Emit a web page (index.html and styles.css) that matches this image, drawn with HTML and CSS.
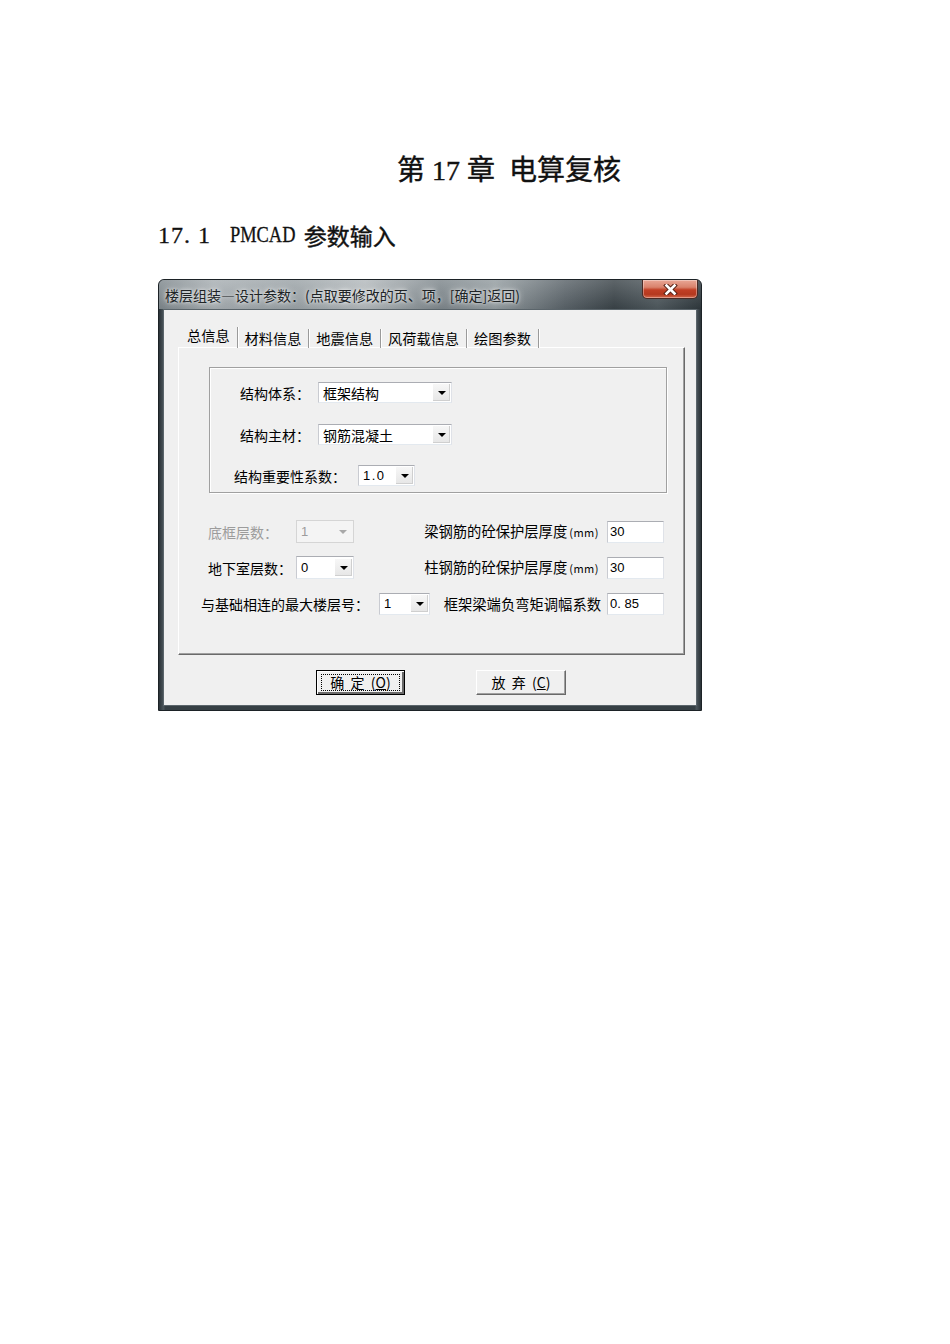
FILE: index.html
```html
<!DOCTYPE html>
<html lang="zh-CN">
<head>
<meta charset="utf-8">
<title>第17章 电算复核</title>
<link rel="stylesheet" href="styles.css">
</head>
<body>
<div class="page">
  <h1 class="chapter">第 17 章&nbsp;&nbsp;电算复核</h1>
  <h2 class="section"><span class="secnum">17. 1</span><span class="pm">PMCAD</span><span class="seccn">参数输入</span></h2>

  <div class="window">
    <div class="titlebar">
      <span class="title">楼层组装—设计参数：(点取要修改的页、项，[确定]返回)</span>
      <div class="close">
        <svg width="15" height="11" viewBox="0 0 15 11">
          <path d="M3.5 1.5 L11.5 9.5 M11.5 1.5 L3.5 9.5" stroke="#5a2418" stroke-width="4.6" stroke-linecap="square" fill="none"/>
          <path d="M3.5 1.5 L11.5 9.5 M11.5 1.5 L3.5 9.5" stroke="#ffffff" stroke-width="2.6" stroke-linecap="square" fill="none"/>
        </svg>
      </div>
    </div>
    <div class="client">
      <div class="tabs">
        <span class="tab active">总信息</span>
        <span class="tab">材料信息</span>
        <span class="tab">地震信息</span>
        <span class="tab">风荷载信息</span>
        <span class="tab">绘图参数</span>
      </div>
      <div class="panel">
        <div class="group">
          <div class="grow g1">
            <span class="lbl lbl-a">结构体系：</span>
            <div class="combo combo-wide"><span class="cval">框架结构</span><span class="arrow"><i class="tri"></i></span></div>
          </div>
          <div class="grow g2">
            <span class="lbl lbl-a">结构主材：</span>
            <div class="combo combo-wide"><span class="cval">钢筋混凝土</span><span class="arrow"><i class="tri"></i></span></div>
          </div>
          <div class="grow g3">
            <span class="lbl lbl-b">结构重要性系数：</span>
            <div class="combo combo-imp"><span class="cval num">1.0</span><span class="arrow"><i class="tri"></i></span></div>
          </div>
        </div>

        <div class="rows">
          <div class="row">
            <div class="left left-ab">
              <span class="lbl lbl-c disabled">底框层数：</span>
              <div class="combo combo-s disabled-box"><span class="cval num">1</span><span class="arrow"><i class="tri grey"></i></span></div>
            </div>
            <div class="right">
              <span class="lbl">梁钢筋的砼保护层厚度<span class="mm">(mm)</span></span>
              <div class="input"><span class="num">30</span></div>
            </div>
          </div>
          <div class="row">
            <div class="left left-ab">
              <span class="lbl lbl-c">地下室层数：</span>
              <div class="combo combo-s"><span class="cval num">0</span><span class="arrow"><i class="tri"></i></span></div>
            </div>
            <div class="right">
              <span class="lbl">柱钢筋的砼保护层厚度<span class="mm">(mm)</span></span>
              <div class="input"><span class="num">30</span></div>
            </div>
          </div>
          <div class="row">
            <div class="left left-c">
              <span class="lbl lbl-d">与基础相连的最大楼层号：</span>
              <div class="combo combo-xs"><span class="cval num">1</span><span class="arrow"><i class="tri"></i></span></div>
            </div>
            <div class="right">
              <span class="lbl">框架梁端负弯矩调幅系数</span>
              <div class="input"><span class="num">0. 85</span></div>
            </div>
          </div>
        </div>
      </div>

      <div class="buttons">
        <div class="btn btn-default"><span class="focus">确&nbsp;&nbsp;定&nbsp;&nbsp;(<u>O</u>)</span></div>
        <div class="btn"><span class="plain">放&nbsp;&nbsp;弃&nbsp;&nbsp;(<u>C</u>)</span></div>
      </div>
    </div>
  </div>
</div>
</body>
</html>
```

FILE: styles.css
```css
* { box-sizing: border-box; margin: 0; padding: 0; }

body {
  background: #ffffff;
  color: #000;
  font-family: "Noto Sans CJK SC", sans-serif;
  width: 950px;
  height: 1344px;
}

.page {
  padding: 151px 0 0 158px;
}

.chapter {
  width: 702px;
  text-align: center;
  font-family: "Liberation Serif", "Noto Sans CJK SC", serif;
  font-size: 28px;
  line-height: 40px;
  font-weight: 400;
  -webkit-text-stroke: 0.4px #111;
  color: #111;
}

.section {
  margin-top: 29px;
  height: 30px;
  display: flex;
  align-items: center;
  font-weight: 400;
  color: #111;
}

.secnum {
  font-family: "Liberation Serif", serif;
  font-size: 24px;
  width: 72px;
  letter-spacing: 1px;
  -webkit-text-stroke: 0.3px #111;
}

.pm {
  display: inline-block;
  font-family: "Liberation Serif", serif;
  font-size: 23px;
  transform: scaleX(0.8);
  transform-origin: left center;
  margin-right: -12px;
  -webkit-text-stroke: 0.3px #111;
}

.seccn {
  font-family: "Noto Sans CJK SC", sans-serif;
  font-size: 23px;
  font-weight: 400;
  -webkit-text-stroke: 0.4px #111;
  margin-left: 4px;
}

/* ---------- window ---------- */
.window {
  margin-top: 29px;
  width: 544px;
  height: 432px;
  border: 1px solid #1c2226;
  border-radius: 6px 6px 0 0;
  background:
    linear-gradient(to right, #2a3237 0%, #4a545a 0.8%, #363f44 1.2%, #363f44 98.8%, #4a545a 99.2%, #2a3237 100%);
  display: flex;
  flex-direction: column;
  overflow: hidden;
}

.titlebar {
  height: 29px;
  display: flex;
  align-items: flex-start;
  background:
    linear-gradient(to bottom, rgba(255,255,255,0.18), rgba(0,0,0,0.05)),
    linear-gradient(to right, #7e878c 0%, #a7aeb2 10%, #9aa2a6 25%, #b3b9bc 38%, #7d868b 52%, #939ca0 62%, #596268 75%, #3a4348 84%, #4f595e 92%, #2f383d 100%);
}

.title {
  margin: 6px 0 0 6px;
  font-size: 14px;
  line-height: 18px;
  color: #202426;
  text-shadow: 0 0 6px rgba(255,255,255,0.9), 0 0 3px rgba(255,255,255,0.7);
  white-space: nowrap;
}

.close {
  margin-left: auto;
  margin-right: 3px;
  width: 56px;
  height: 19px;
  border: 1px solid #4a2a24;
  border-top: none;
  border-radius: 0 0 5px 5px;
  background: linear-gradient(to bottom, #e9a796 0%, #d9826c 40%, #c13f25 55%, #b5391f 80%, #d4694c 100%);
  box-shadow: inset 0 0 0 1px rgba(255,255,255,0.35);
  display: flex;
  align-items: center;
  justify-content: center;
}

.client {
  margin: 0 4px 4px 4px;
  flex: 1;
  background: #f0f0f0;
  border: 1px solid #5b656b;
  padding: 15px 11px 0 14px;
}

/* ---------- tabs ---------- */
.tabs {
  height: 23px;
  display: flex;
  align-items: flex-end;
  padding-left: 3px;
  margin-bottom: -1px;
}

.tab {
  font-size: 14.2px;
  line-height: 19px;
  height: 19px;
  padding: 0 7px 0 6px;
  border-right: 1px solid #9a9a9a;
  box-shadow: 1px 0 0 #ffffff;
  margin-right: 1px;
  color: #000;
  white-space: nowrap;
}

.tab.active {
  line-height: 17px;
  height: 21px;
  padding-right: 7px;
}

.panel {
  width: 507px;
  height: 308px;
  border-top: 1px solid #ffffff;
  border-left: 1px solid #ffffff;
  border-right: 1px solid #6a6a6a;
  border-bottom: 1px solid #6a6a6a;
  box-shadow: inset -1px -1px 0 #a0a0a0;
  padding: 19px 0 0 30px;
}

.group {
  width: 458px;
  height: 126px;
  border: 1px solid #a0a0a0;
  box-shadow: inset 1px 1px 0 #ffffff, 1px 1px 0 #ffffff;
  padding-top: 14px;
  display: flex;
  flex-direction: column;
}

.grow {
  display: flex;
  align-items: center;
  height: 21px;
}

.g1 { padding-left: 30px; }
.g2 { padding-left: 30px; margin-top: 21px; }
.g3 { padding-left: 24px; margin-top: 20px; }

.lbl {
  font-size: 14px;
  line-height: 20px;
  white-space: nowrap;
  color: #000;
}

.lbl-a { width: 78px; }
.lbl-b { width: 124px; }
.lbl-c { width: 88px; }
.lbl-d { width: 178px; }

.disabled { color: #9c9c9c; }

.combo {
  height: 21px;
  background: #ffffff;
  border-top: 1px solid #abadb3;
  border-left: 1px solid #c9cbd1;
  border-right: 1px solid #dfe2e8;
  border-bottom: 1px solid #e3e9ef;
  display: flex;
  align-items: center;
  justify-content: space-between;
}

.combo-wide { width: 134px; }
.combo-imp { width: 57px; }
.combo-s { width: 58px; height: 23px; }
.combo-xs { width: 51px; height: 22px; }

.cval {
  font-size: 14px;
  padding-left: 4px;
  line-height: 18px;
  white-space: nowrap;
}

.num {
  font-family: "Liberation Sans", "DejaVu Sans", sans-serif;
  font-size: 13px;
}

.combo-imp .num { letter-spacing: 1.5px; }

.arrow {
  width: 18px;
  height: 17px;
  margin-right: 1px;
  background: linear-gradient(to bottom, #f7f7f7, #e6e6e6);
  border-left: 1px solid #ffffff;
  box-shadow: inset -1px -1px 0 #cfcfcf;
  display: flex;
  align-items: center;
  justify-content: center;
}

.tri {
  width: 0;
  height: 0;
  border-left: 4px solid transparent;
  border-right: 4px solid transparent;
  border-top: 4px solid #000;
}

.tri.grey { border-top-color: #a8a8a8; }

.disabled-box {
  border-color: #d5d5d5;
  background: #f4f4f4;
}
.disabled-box .cval { color: #9c9c9c; }
.disabled-box .arrow { background: #f4f4f4; box-shadow: none; border-left: none; }

/* ---------- lower rows ---------- */
.rows {
  margin: 27px 0 0 -30px;
  padding-right: 20px;
  display: flex;
  flex-direction: column;
  gap: 13px;
}

.row {
  height: 23px;
  display: flex;
  align-items: center;
  justify-content: space-between;
}

.left { display: flex; align-items: center; }
.left-ab { margin-left: 29px; }
.left-c { margin-left: 22px; }

.right { display: flex; align-items: center; }
.right .lbl { font-size: 14.3px; }

.mm {
  font-size: 11px;
  letter-spacing: 0.5px;
  margin-left: 2px;
  margin-right: 2px;
}

.input {
  width: 57px;
  height: 22px;
  margin-left: 6px;
  background: #ffffff;
  border-top: 1px solid #abadb3;
  border-left: 1px solid #c9cbd1;
  border-right: 1px solid #dfe2e8;
  border-bottom: 1px solid #e3e9ef;
  display: flex;
  align-items: center;
  padding-left: 2px;
}

/* ---------- buttons ---------- */
.buttons {
  margin-top: 15px;
  padding-left: 138px;
  display: flex;
  gap: 71px;
}

.btn {
  width: 90px;
  height: 25px;
  background: #f0f0f0;
  border-top: 1px solid #ffffff;
  border-left: 1px solid #ffffff;
  border-right: 1px solid #696969;
  border-bottom: 1px solid #696969;
  box-shadow: inset -1px -1px 0 #a0a0a0;
  display: flex;
  align-items: center;
  justify-content: center;
  font-size: 14px;
}

.btn-default {
  width: 89px;
  border: 1px solid #000;
  box-shadow: inset 1px 1px 0 #ffffff, inset -2px -2px 0 #696969;
}

.focus {
  border: 1px dotted #000;
  width: 79px;
  height: 17px;
  line-height: 15px;
  text-align: center;
}

.plain { line-height: 17px; }

.btn u { text-underline-offset: 1px; }
```
